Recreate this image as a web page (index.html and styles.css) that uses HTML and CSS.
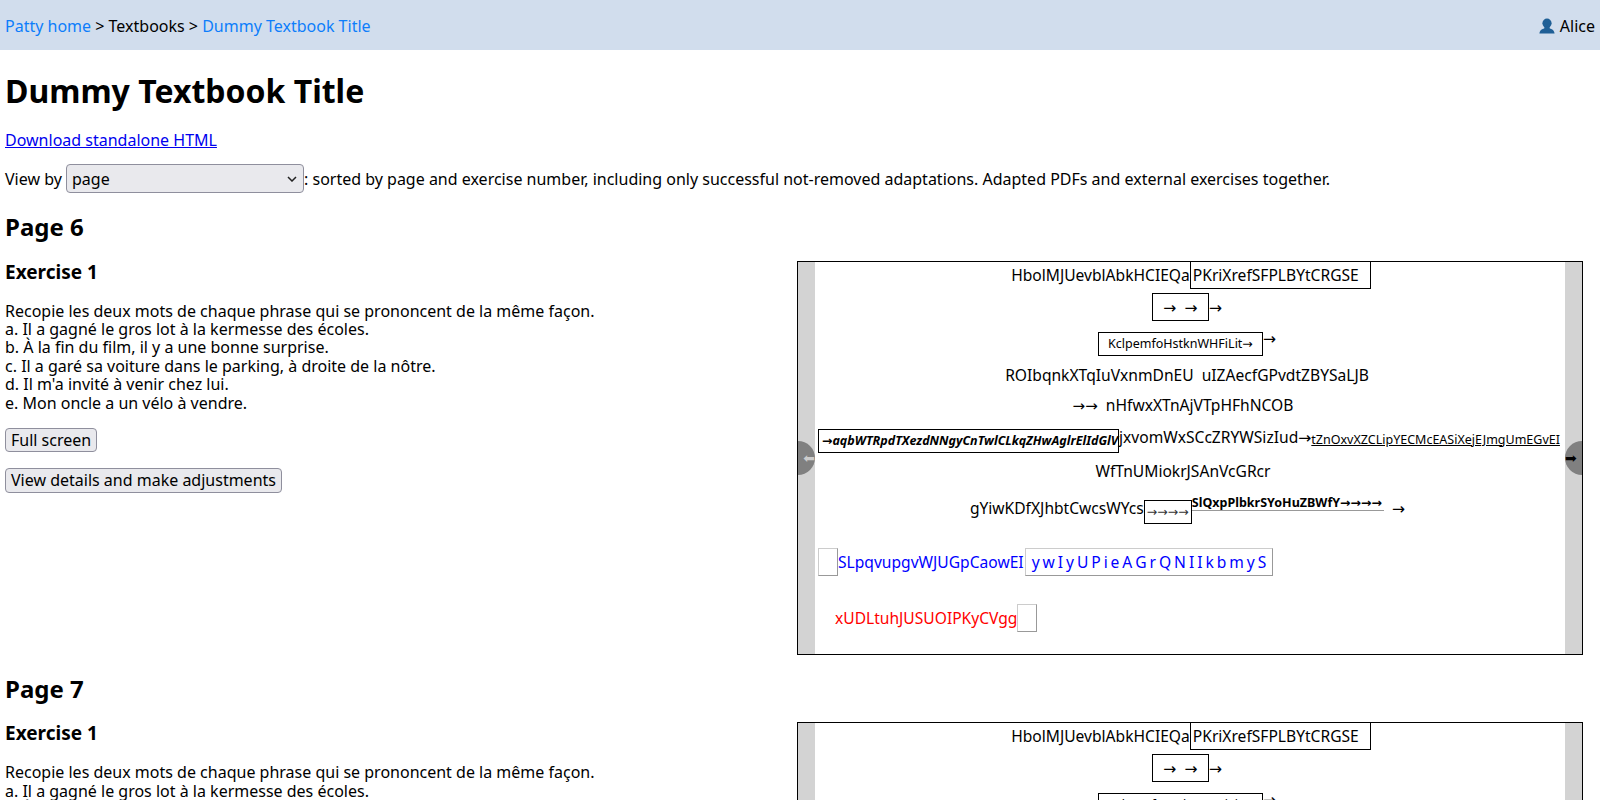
FILE: index.html
```html
<!DOCTYPE html>
<html lang="en">
<head>
  <meta charset="UTF-8">
  <title>Dummy Textbook Title</title>
  <link rel="stylesheet" href="styles.css">
</head>
<body>

  <nav class="topbar">
    <div><a class="crumb" href="#">Patty home</a> &gt; Textbooks &gt; <a class="crumb" href="#">Dummy Textbook Title</a></div>
    <div class="user">
      <svg class="user-icon" viewBox="0 0 16 16" width="16" height="16"><circle cx="8" cy="5.2" r="4.6"/><path d="M5.5 8.5 L10.5 8.5 L10.8 10.6 C13 11.2 15 12 15.6 15.4 L0.4 15.4 C1 12 3 11.2 5.2 10.6 Z"/></svg>
      Alice
    </div>
  </nav>

  <main class="content">
    <h1>Dummy Textbook Title</h1>
    <p class="download"><a href="#">Download standalone HTML</a></p>
    <p class="view-by">View by <select class="view-select"><option>page</option></select>: sorted by page and exercise number, including only successful not-removed adaptations. Adapted PDFs and external exercises together.</p>

    <h2>Page 6</h2>
    <div class="exercise-row">
      <div>
        <h3>Exercise 1</h3>
        <p>Recopie les deux mots de chaque phrase qui se prononcent de la même façon.<br>
        a. Il a gagné le gros lot à la kermesse des écoles.<br>
        b. À la fin du film, il y a une bonne surprise.<br>
        c. Il a garé sa voiture dans le parking, à droite de la nôtre.<br>
        d. Il m'a invité à venir chez lui.<br>
        e. Mon oncle a un vélo à vendre.</p>
        <p><button>Full screen</button></p>
        <p><button>View details and make adjustments</button></p>
      </div>
      <div class="frame">
        <div class="side"><span class="nav-dot nav-prev">⬅</span></div>
        <div class="sheet">
          <div class="line line-1">HbolMJUevblAbkHCIEQa<span class="box box-1">PKriXrefSFPLBYtCRGSE</span></div>
          <div class="line line-2"><span class="box box-2">→ →</span>→</div>
          <div class="line line-3"><span class="box box-3">KclpemfoHstknWHFiLit→</span><span class="raised">→</span></div>
          <div class="line line-4">ROIbqnkXTqIuVxnmDnEU&nbsp; uIZAecfGPvdtZBYSaLJB</div>
          <div class="line line-5"><span class="thin">→→</span>&nbsp; nHfwxXTnAjVTpHFhNCOB</div>
          <div class="line line-6"><span class="box box-6">→aqbWTRpdTXezdNNgyCnTwlCLkqZHwAglrElIdGlV</span>jxvomWxSCcZRYWSizIud→<u class="small-link">tZnOxvXZCLipYECMcEASiXejEJmgUmEGvEI</u></div>
          <div class="line line-7">WfTnUMiokrJSAnVcGRcr</div>
          <div class="line line-8">gYiwKDfXJhbtCwcsWYcs<span class="box box-8">→→→→</span><span class="bold-run">SlQxpPlbkrSYoHuZBWfY→→→→</span> <span class="low-arrow">→</span></div>
          <div class="line line-9 blue"><span class="field field-empty"></span>SLpqvupgvWJUGpCaowEI<span class="field field-spaced">y w I y U P i e A G r Q N I I k b m y S</span></div>
          <div class="line line-10 red">xUDLtuhJUSUOIPKyCVgg<span class="field field-empty"></span></div>
        </div>
        <div class="side"><span class="nav-dot nav-next">➡</span></div>
      </div>
    </div>

    <h2>Page 7</h2>
    <div class="exercise-row">
      <div>
        <h3>Exercise 1</h3>
        <p>Recopie les deux mots de chaque phrase qui se prononcent de la même façon.<br>
        a. Il a gagné le gros lot à la kermesse des écoles.<br>
        b. À la fin du film, il y a une bonne surprise.<br>
        c. Il a garé sa voiture dans le parking, à droite de la nôtre.<br>
        d. Il m'a invité à venir chez lui.<br>
        e. Mon oncle a un vélo à vendre.</p>
        <p><button>Full screen</button></p>
        <p><button>View details and make adjustments</button></p>
      </div>
      <div class="frame">
        <div class="side"><span class="nav-dot nav-prev">⬅</span></div>
        <div class="sheet">
          <div class="line line-1">HbolMJUevblAbkHCIEQa<span class="box box-1">PKriXrefSFPLBYtCRGSE</span></div>
          <div class="line line-2"><span class="box box-2">→ →</span>→</div>
          <div class="line line-3"><span class="box box-3">KclpemfoHstknWHFiLit→</span><span class="raised">→</span></div>
          <div class="line line-4">ROIbqnkXTqIuVxnmDnEU&nbsp; uIZAecfGPvdtZBYSaLJB</div>
          <div class="line line-5"><span class="thin">→→</span>&nbsp; nHfwxXTnAjVTpHFhNCOB</div>
        </div>
        <div class="side"><span class="nav-dot nav-next">➡</span></div>
      </div>
    </div>
  </main>

</body>
</html>
```

FILE: styles.css
```css
body {
  margin: 0;
  font-family: "Noto Sans", "DejaVu Sans", sans-serif;
  font-size: 16px;
  line-height: 1.15;
  color: #000;
}
p {
  margin: 16px 0;
}
.topbar {
  display: flex;
  justify-content: space-between;
  align-items: center;
  box-sizing: border-box;
  height: 50px;
  padding: 2px 5px 0;
  background-color: #d1dded;
}
.crumb {
  color: #0d7dfb;
  text-decoration: none;
}
.user {
  display: flex;
  align-items: center;
  gap: 5px;
}
.user-icon {
  fill: #1f5f96;
}
.content {
  padding: 0 5px;
}
h1 {
  font-size: 32px;
  margin: 23px 0 21px;
}
h2 {
  font-size: 24px;
  margin: 19px 0 20px;
}
h3 {
  font-size: 19px;
  margin: 1px 0 18px;
}
.download {
  margin-bottom: 15px;
}
.view-by {
  margin: 15px 0 20px;
}
.view-select {
  appearance: none;
  width: 238px;
  height: 29px;
  padding: 2px 0 0 5px;
  font: inherit;
  color: #000;
  background-color: #e9e9ed;
  background-image: url("data:image/svg+xml,%3Csvg xmlns='http://www.w3.org/2000/svg' width='10' height='6'%3E%3Cpath d='M1 1l4 4 4-4' fill='none' stroke='%23222' stroke-width='1.5'/%3E%3C/svg%3E");
  background-repeat: no-repeat;
  background-position: right 6px center;
  border: 1px solid #8f8f9d;
  border-radius: 4px;
}
button {
  font: inherit;
  color: #000;
  padding: 2px 5px;
  background-color: #e9e9ed;
  border: 1px solid #8f8f9d;
  border-radius: 4px;
}
.exercise-row {
  display: grid;
  grid-template-columns: 1fr 786px;
  padding-right: 12px;
  margin-bottom: 20px;
}
.frame {
  display: flex;
  height: 392px;
  border: 1px solid #000;
  overflow: hidden;
}
.side {
  position: relative;
  flex: 0 0 17px;
  background-color: #d3d3d3;
}
.sheet {
  flex: 1;
  min-width: 0;
  font-size: 15.6px;
  text-align: center;
  white-space: nowrap;
}
.nav-dot {
  position: absolute;
  top: 179px;
  width: 34px;
  height: 34px;
  line-height: 34px;
  border-radius: 50%;
  background-color: #808080;
  font-size: 14px;
}
.nav-prev {
  left: -17px;
  text-align: right;
  color: #ccc;
}
.nav-next {
  left: 0;
  text-align: left;
  color: #000;
}
.box {
  display: inline-block;
  box-sizing: border-box;
  border: 1px solid #000;
}

/* each line: height, line-height and gap above it */
.line-1 {
  height: 25px;
  line-height: 27px;
  padding-left: 2px;
}
.box-1 {
  width: 181px;
  height: 28px;
  margin: -1px 0 0;
  padding-left: 2px;
  text-align: left;
  line-height: 26px;
}
.line-2 {
  height: 28px;
  line-height: 28px;
  margin-top: 6px;
  padding-right: 6px;
}
.box-2 {
  width: 57px;
  height: 28px;
  line-height: 26px;
  word-spacing: 4px;
}
.line-3 {
  height: 23px;
  line-height: 23px;
  margin-top: 10px;
  padding-right: 6px;
}
.box-3 {
  width: 165px;
  height: 24px;
  line-height: 22px;
  font-size: 12.5px;
}
.raised {
  line-height: 0;
  vertical-align: 4px;
}
.line-4 {
  height: 20px;
  line-height: 20px;
  margin-top: 11px;
  padding-right: 6px;
}
.line-5 {
  height: 20px;
  line-height: 20px;
  margin-top: 10px;
  padding-right: 14px;
}
.thin {
  font-size: 15px;
}
.line-6 {
  height: 17px;
  line-height: 17px;
  margin-top: 14px;
  text-align: left;
  padding-left: 3px;
}
.box-6 {
  width: 301px;
  height: 24px;
  line-height: 22px;
  padding-left: 3px;
  vertical-align: -2px;
  font-size: 12.5px;
  font-weight: bold;
  font-style: italic;
}
.small-link {
  font-size: 12.5px;
  vertical-align: -1px;
}
.line-7 {
  height: 20px;
  line-height: 20px;
  margin-top: 15px;
  padding-right: 14px;
}
.line-8 {
  height: 28px;
  line-height: 28px;
  margin-top: 13px;
  padding-right: 5px;
}
.box-8 {
  width: 48px;
  height: 24px;
  line-height: 22px;
  font-size: 12.5px;
  color: #333;
  vertical-align: -2px;
}
.bold-run {
  display: inline-block;
  padding-right: 2px;
  font-size: 12.5px;
  font-weight: bold;
  line-height: 15px;
  border-bottom: 1px solid #999;
  vertical-align: 7px;
}
.low-arrow {
  padding-left: 4px;
}
.blue {
  color: #00f;
}
.red {
  color: #f00;
}
.field {
  display: inline-block;
  box-sizing: border-box;
  height: 28px;
  line-height: 26px;
  border: 1px solid #ccc;
  border-right-color: #999;
  border-bottom-color: #999;
}
.field-empty {
  width: 20px;
  vertical-align: -8px;
}
.field-spaced {
  margin-left: 1px;
  padding: 0 6px;
  word-spacing: -1.1px;
}
.line-9 {
  height: 28px;
  line-height: 28px;
  margin-top: 26px;
  text-align: left;
  padding-left: 3px;
}
.line-10 {
  height: 28px;
  line-height: 28px;
  margin-top: 28px;
  text-align: left;
  padding-left: 20px;
}
```
